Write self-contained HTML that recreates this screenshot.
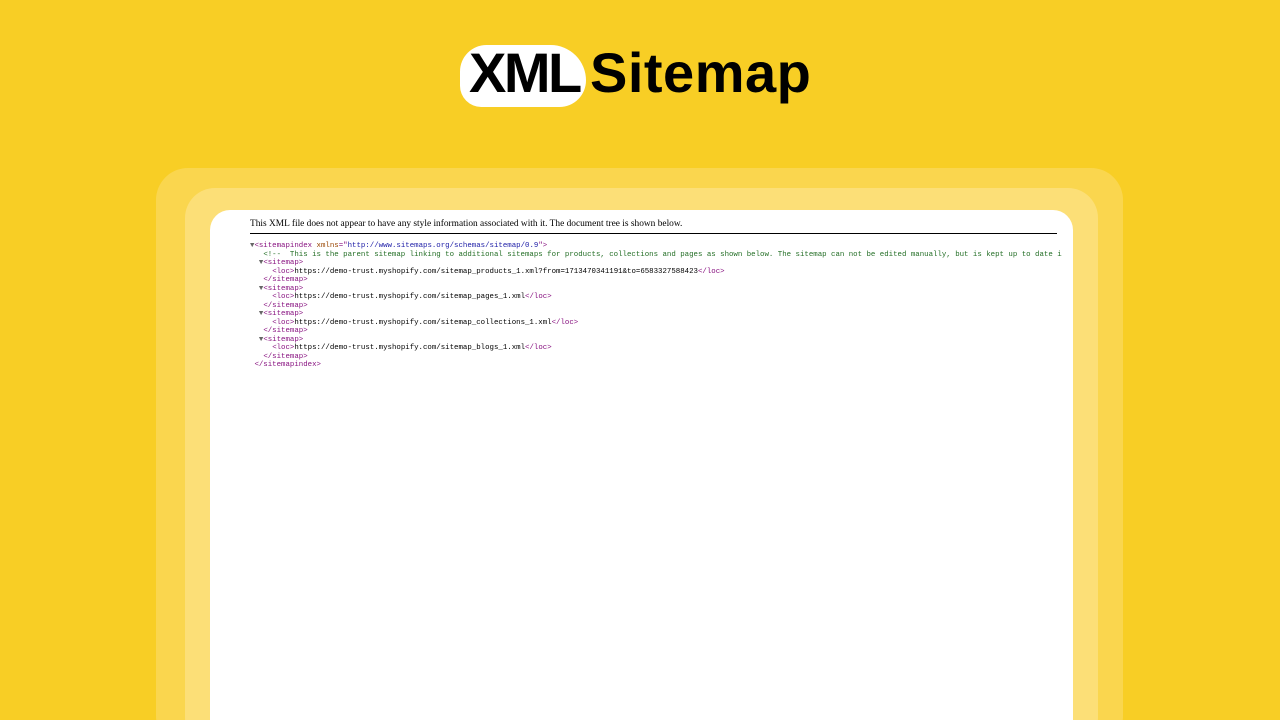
<!DOCTYPE html>
<html style="margin:0;width:1280px;height:720px;overflow:hidden"><head><meta charset="utf-8"><style>
body{margin:0;width:1280px;height:720px;background:#F8CE25;overflow:hidden;position:relative;font-family:"Liberation Sans",sans-serif}
.p1{position:absolute;left:156px;top:168px;width:967px;height:580px;background:#FAD64E;border-radius:32px}
.p2{position:absolute;left:185px;top:188px;width:913px;height:560px;background:#FCDF77;border-radius:30px}
.p3{position:absolute;left:210px;top:210px;width:863px;height:530px;background:#fff;border-radius:20px;overflow:hidden}
.hdr{position:absolute;left:40px;top:9px;font-family:"Liberation Serif",serif;font-size:9.4px;color:#000}
.rule{position:absolute;left:40px;top:23px;width:807px;height:1px;background:#000}
pre{position:absolute;left:40px;top:32px;margin:0;font-family:"Liberation Mono",monospace;font-size:7.4px;line-height:8.5px;color:#000;white-space:pre}
.t{color:#881280}.a{color:#994500}.v{color:#1a1aa6}.c{color:#236e25}.ar{color:#666}
.logo{position:absolute;left:460px;top:45px;width:126px;height:62px;background:#fff;border-radius:30px 40px 30px 24px}
.lt{position:absolute;top:40px;font-weight:bold;font-size:56px;color:#000}
</style></head><body>
<div class="logo"></div>
<div class="lt" style="left:469px;letter-spacing:-2.5px">XML</div>
<div class="lt" style="left:590px;letter-spacing:0.5px">Sitemap</div>
<div class="p1"></div><div class="p2"></div>
<div class="p3">
<div class="hdr">This XML file does not appear to have any style information associated with it. The document tree is shown below.</div>
<div class="rule"></div>
<pre><span class="ar">▼</span><span class="t">&lt;sitemapindex</span> <span class="a">xmlns</span><span class="t">="</span><span class="v">http://www.sitemaps.org/schemas/sitemap/0.9</span><span class="t">"&gt;</span>
   <span class="c">&lt;!--  This is the parent sitemap linking to additional sitemaps for products, collections and pages as shown below. The sitemap can not be edited manually, but is kept up to date i</span>
  <span class="ar">▼</span><span class="t">&lt;sitemap&gt;</span>
     <span class="t">&lt;loc&gt;</span>https://demo-trust.myshopify.com/sitemap_products_1.xml?from=1713470341191&amp;to=6583327588423<span class="t">&lt;/loc&gt;</span>
   <span class="t">&lt;/sitemap&gt;</span>
  <span class="ar">▼</span><span class="t">&lt;sitemap&gt;</span>
     <span class="t">&lt;loc&gt;</span>https://demo-trust.myshopify.com/sitemap_pages_1.xml<span class="t">&lt;/loc&gt;</span>
   <span class="t">&lt;/sitemap&gt;</span>
  <span class="ar">▼</span><span class="t">&lt;sitemap&gt;</span>
     <span class="t">&lt;loc&gt;</span>https://demo-trust.myshopify.com/sitemap_collections_1.xml<span class="t">&lt;/loc&gt;</span>
   <span class="t">&lt;/sitemap&gt;</span>
  <span class="ar">▼</span><span class="t">&lt;sitemap&gt;</span>
     <span class="t">&lt;loc&gt;</span>https://demo-trust.myshopify.com/sitemap_blogs_1.xml<span class="t">&lt;/loc&gt;</span>
   <span class="t">&lt;/sitemap&gt;</span>
 <span class="t">&lt;/sitemapindex&gt;</span></pre>
</div>
</body></html>
